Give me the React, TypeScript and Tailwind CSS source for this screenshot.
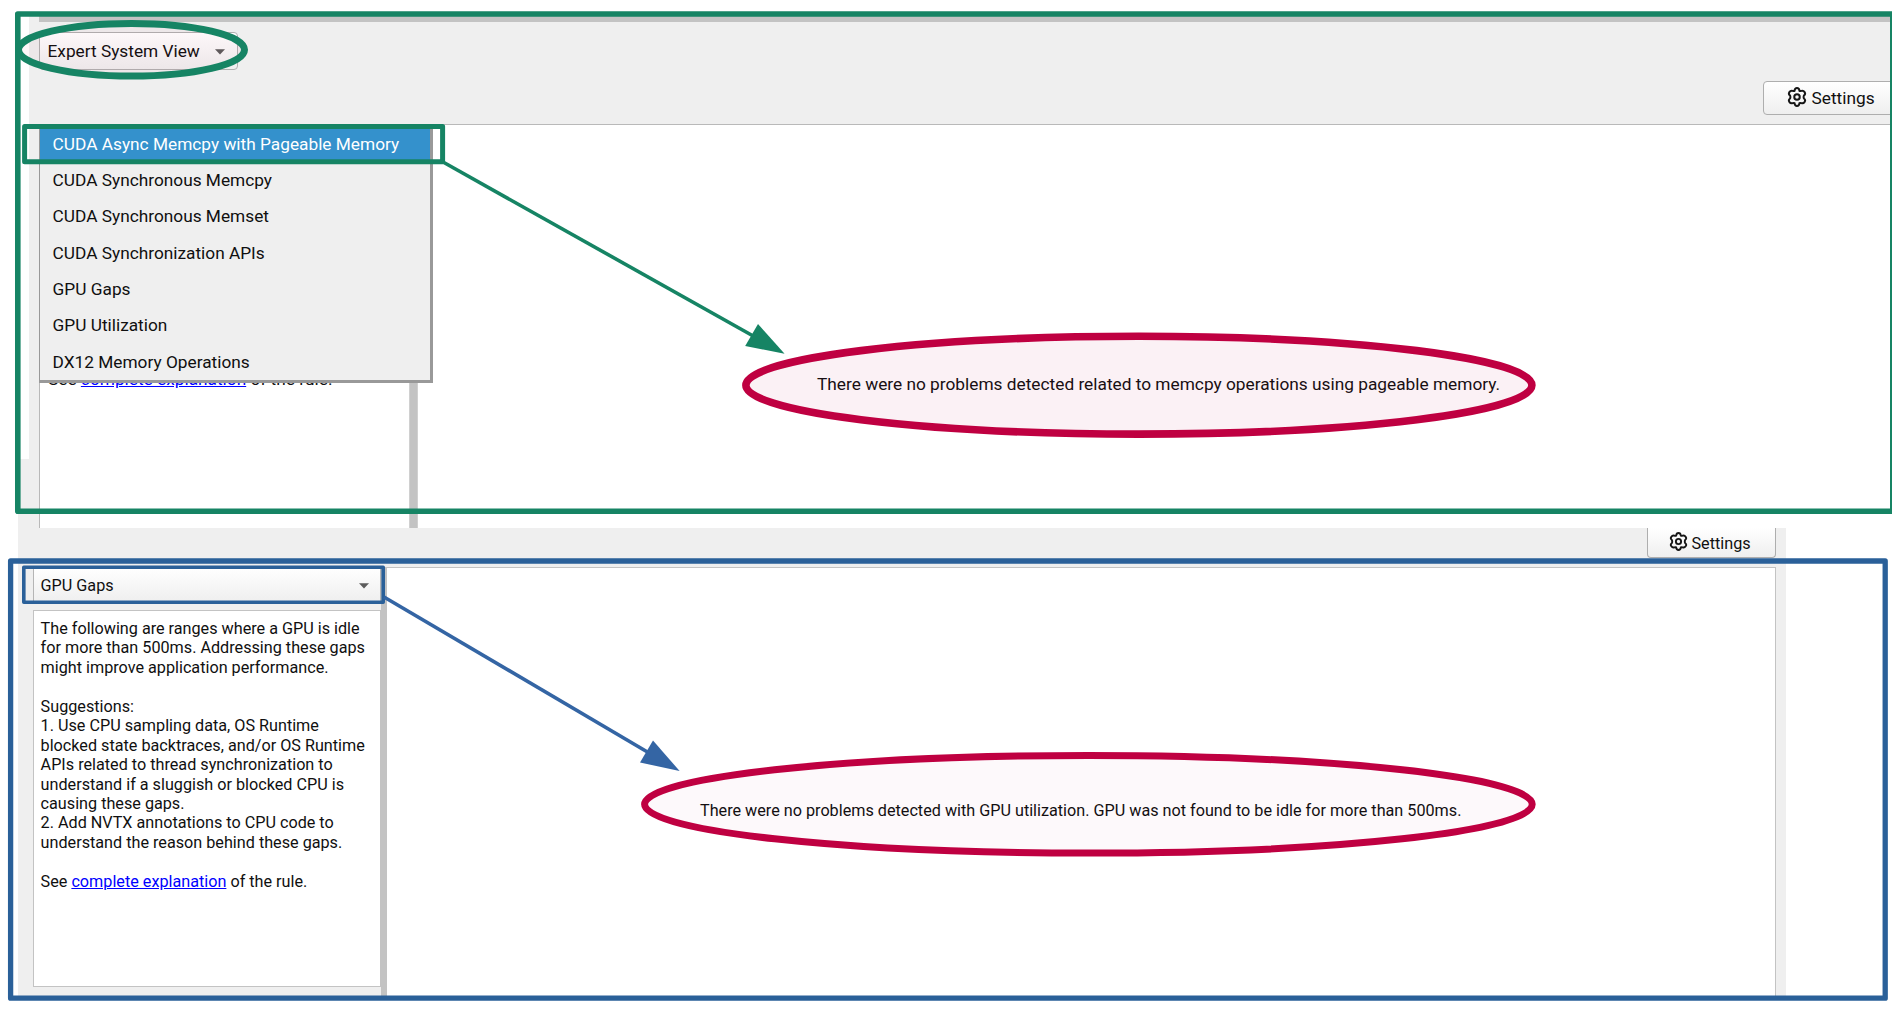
import React from "react";

const MENU = [
  "CUDA Async Memcpy with Pageable Memory",
  "CUDA Synchronous Memcpy",
  "CUDA Synchronous Memset",
  "CUDA Synchronization APIs",
  "GPU Gaps",
  "GPU Utilization",
  "DX12 Memory Operations",
];

function Gear({ className }: { className: string }) {
  return (
    <svg viewBox="0 0 24 24" className={className} fill="none" stroke="#161616" strokeWidth="2.4" strokeLinejoin="round">
      <path d="M9 4.6 Q9.4 1.3 12 1.3 Q14.6 1.3 15 4.6 Q15.8 5.2 17.2 4.6 Q19.6 3.8 21.2 6.2 Q22.6 8.6 20.3 10.2 Q19.6 12 20.3 13.8 Q22.6 15.4 21.2 17.8 Q19.6 20.2 17.2 19.4 Q15.8 18.8 15 19.4 Q14.6 22.7 12 22.7 Q9.4 22.7 9 19.4 Q8.2 18.8 6.8 19.4 Q4.4 20.2 2.8 17.8 Q1.4 15.4 3.7 13.8 Q4.4 12 3.7 10.2 Q1.4 8.6 2.8 6.2 Q4.4 3.8 6.8 4.6 Q8.2 5.2 9 4.6Z" />
      <circle cx="12" cy="12" r="3.3" />
    </svg>
  );
}

function Caret() {
  return (
    <svg viewBox="0 0 10 6" className="-mt-px h-[6px] w-[10px] shrink-0">
      <path d="M0 0.2H10L5 5.4Z" fill="#5c5c5c" />
    </svg>
  );
}

function TopPanel() {
  return (
    <section className="flex h-[528px]">
      <div className="flex w-[29px] flex-col items-end pt-[459px]">
        <div className="w-[11px] flex-1 bg-[#efefef]" />
      </div>
      <div className="flex min-w-0 flex-1 flex-col pt-[14px]">
        <header className="flex h-[110px] flex-col bg-[#efefef] pl-[10px]">
          <div className="h-2 shrink-0 bg-[#c3c3c3]" />
          <div className="mt-[10px] flex h-[38px] w-[199px] shrink-0 items-center justify-between rounded-[4px] border border-[#b0b0b0] bg-linear-to-b from-white to-[#efefef] pt-0.5 pr-3 pl-[7.5px] text-[17.28px]">
            <span className="whitespace-nowrap">Expert System View</span>
            <Caret />
          </div>
          <div className="-mr-4 mt-[11px] flex h-[34px] w-[145px] shrink-0 items-center self-end rounded-[4px] border border-[#aeaeae] bg-linear-to-b from-white to-[#efefef] pt-0.5 pl-[22.5px] text-[17.28px]">
            <Gear className="-mt-[5px] mr-[5px] size-5" />
            Settings
          </div>
        </header>
        <div className="flex flex-1 bg-[#efefef] pl-[10px]">
          <aside className="relative w-[370px] border-t border-l border-[#b9b9b9] bg-white">
            <p className="mt-[244px] ml-2 whitespace-nowrap text-[17.28px] leading-5">
              See <a className="text-[#0000ff] underline">complete explanation</a> of the rule.
            </p>
            <ul className="absolute top-0 -left-px h-[258px] w-[394px] border-r-[3px] border-b-[3px] border-l border-[#999999] bg-[#efefef] text-[17.28px]">
              {MENU.map((label, i) => (
                <li
                  key={label}
                  className={
                    i === 0
                      ? "flex h-[36.35px] items-center bg-[#3491cc] pt-[3px] pl-[12.6px] whitespace-nowrap text-white"
                      : "flex h-[36.35px] items-center pt-[3px] pl-[12.6px] whitespace-nowrap"
                  }
                >
                  {label}
                </li>
              ))}
            </ul>
          </aside>
          <div className="w-[9px] border-x border-[#d0d0d0] bg-[#c3c3c3]" />
          <main className="min-w-0 flex-1 border-t border-[#b9b9b9] bg-white pt-[249px] pl-[399px]">
            <p className="whitespace-nowrap text-[17.3px] leading-5">
              There were no problems detected related to memcpy operations using pageable memory.
            </p>
          </main>
        </div>
      </div>
    </section>
  );
}

function BottomPanel() {
  return (
    <section className="ml-[18px] flex h-[469px] w-[1768px] flex-col bg-[#efefef]">
      <header className="flex h-[39px] justify-end pr-[10px]">
        <div className="flex h-[30px] w-[129px] items-center rounded-b-[4px] border border-t-0 border-[#aeaeae] bg-linear-to-b from-white to-[#efefef] pt-[3px] pl-[20.5px] text-[16.19px]">
          <Gear className="-mt-[5px] mr-[4px] size-[19px]" />
          Settings
        </div>
      </header>
      <div className="flex flex-1 pr-[10px] pl-[15px]">
        <aside className="flex w-[348px] flex-col">
          <div className="flex h-[35px] items-center justify-between border border-[#b5b5b5] bg-linear-to-b from-white to-[#efefef] pt-[3px] pr-[11px] pl-[6.6px] text-[16.19px]">
            <span>GPU Gaps</span>
            <Caret />
          </div>
          <div className="mt-[8px] h-[377px] border border-[#c3c3c3] bg-white px-[6.6px] pt-[8px] text-[16.19px] leading-[19.44px] whitespace-nowrap">
            <p>The following are ranges where a GPU is idle<br />for more than 500ms. Addressing these gaps<br />might improve application performance.</p>
            <p className="mt-[19.44px]">Suggestions:<br />1. Use CPU sampling data, OS Runtime<br />blocked state backtraces, and/or OS Runtime<br />APIs related to thread synchronization to<br />understand if a sluggish or blocked CPU is<br />causing these gaps.<br />2. Add NVTX annotations to CPU code to<br />understand the reason behind these gaps.</p>
            <p className="mt-[19.44px]">See <a className="text-[#0000ff] underline">complete explanation</a> of the rule.</p>
          </div>
        </aside>
        <div className="w-[6px] bg-[#c3c3c3]" />
        <main className="flex-1 border-t border-r border-[#c3c3c3] bg-white pt-[233px] pl-[313px]">
          <p className="whitespace-nowrap text-[16.19px] leading-5">
            There were no problems detected with GPU utilization. GPU was not found to be idle for more than 500ms.
          </p>
        </main>
      </div>
    </section>
  );
}

function Annotations() {
  return (
    <svg className="pointer-events-none absolute inset-0" width="1892" height="1011" viewBox="0 0 1892 1011" fill="none">
      <g stroke="#168464" strokeLinejoin="round">
        <rect x="17.8" y="14" width="1875" height="497.3" strokeWidth="5.6" />
        <rect x="24.6" y="126.6" width="418" height="35.2" strokeWidth="5" />
        <ellipse cx="131.5" cy="49.8" rx="113" ry="26.3" strokeWidth="7" fill="#bf0041" fillOpacity="0.03" />
        <path d="M443 162L755 337" strokeWidth="3.6" />
      </g>
      <path d="M784.6 353.7L745.2 346L758 324Z" fill="#168464" />
      <g stroke="#2a6099" strokeLinejoin="round">
        <rect x="10.6" y="561" width="1874.6" height="437.2" strokeWidth="5.3" />
        <rect x="23.8" y="567.3" width="359.4" height="35" strokeWidth="3.6" />
      </g>
      <path d="M384 597L650 753.5" stroke="#3465a4" strokeWidth="3.6" />
      <path d="M679.6 771L640 762.5L653 740.6Z" fill="#3465a4" />
      <g stroke="#bf0041" fill="#bf0041">
        <ellipse cx="1138.9" cy="385.2" rx="393" ry="48.9" strokeWidth="7.6" fillOpacity="0.055" />
        <ellipse cx="1088.4" cy="804.3" rx="443.8" ry="48.8" strokeWidth="7" fillOpacity="0.025" />
      </g>
    </svg>
  );
}

export default function App() {
  return (
    <div className="relative h-[1011px] w-[1892px] overflow-hidden bg-white font-['Roboto',sans-serif] text-[#101010]">
      <TopPanel />
      <BottomPanel />
      <Annotations />
    </div>
  );
}
